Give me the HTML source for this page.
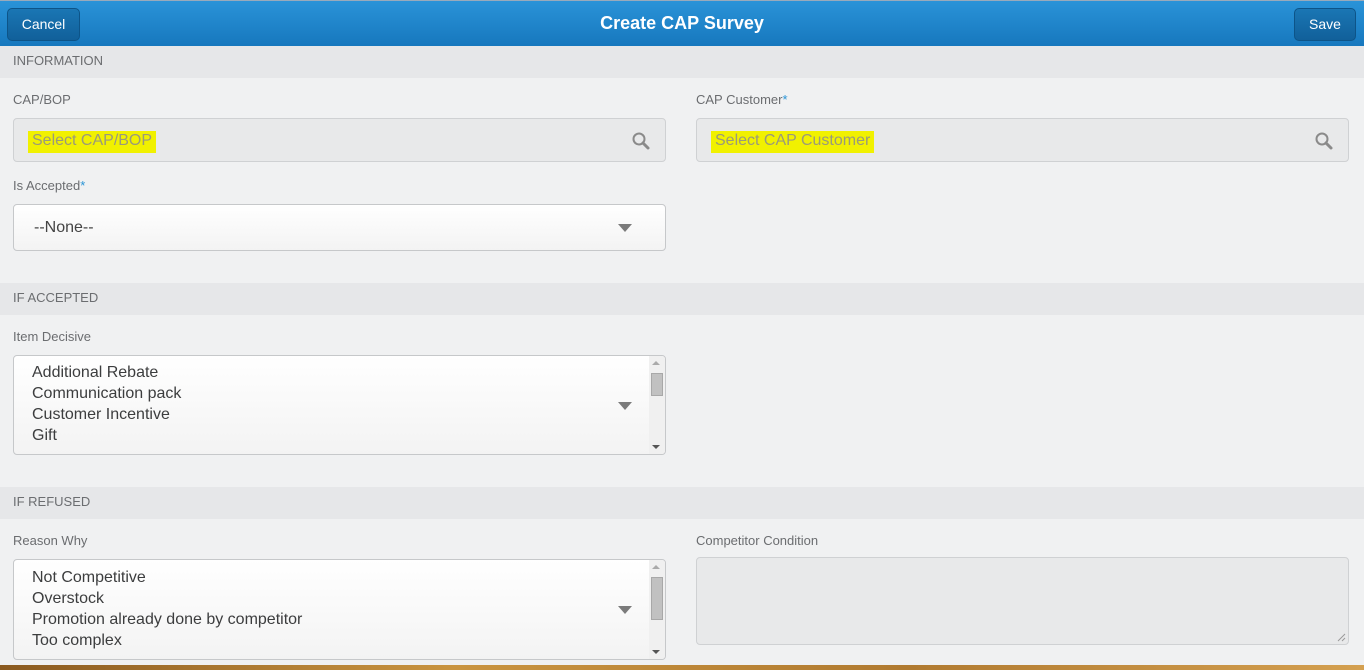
<!DOCTYPE html>
<html><head><meta charset="utf-8"><style>
*{box-sizing:border-box;margin:0;padding:0}
body{width:1364px;height:670px;overflow:hidden;background:#f0f1f2;font-family:"Liberation Sans",sans-serif;position:relative}
.a{position:absolute}
.hdr{left:0;top:0;width:1364px;height:47px;background:linear-gradient(#2a93d8,#1677bd);border-top:1px solid #9ab}
.btn{top:8px;height:33px;border-radius:5px;background:linear-gradient(#1a76b4,#11609a);border:1px solid #0d5488;color:#fff;font-size:14px;text-align:center;line-height:31px}
.title{left:0;width:1364px;top:13px;text-align:center;color:#fff;font-size:18px;font-weight:bold}
.sec{left:0;width:1364px;height:32px;background:#e6e7e9;color:#6b6d70;font-size:13px;padding:7px 0 0 13px}
.lbl{font-size:13px;color:#6b6d70}
.lbl b{color:#2a94d6;font-weight:normal}
.inp{height:44px;border:1px solid #cfd1d3;border-radius:4px;background:#e8e9ea}
.ph{top:12px;left:14px;background:#f1f100;color:#9a9a7a;font-size:16px;padding:1px 4px;height:22px}
.sel{border:1px solid #c6c8ca;border-radius:4px;background:linear-gradient(#fff,#f3f3f3)}
.tri{width:0;height:0;border-left:7px solid transparent;border-right:7px solid transparent;border-top:8px solid #7b7b7b}
.li{font-size:16px;color:#3c3d3e;line-height:21px}
.sb{right:0;top:0;width:16px;height:100%;background:#f0f0f0}
</style></head><body>
<div class="a hdr"></div>
<div class="a btn" style="left:7px;width:73px">Cancel</div>
<div class="a btn" style="left:1294px;width:62px">Save</div>
<div class="a title">Create CAP Survey</div>

<div class="a sec" style="top:46px">INFORMATION</div>
<div class="a lbl" style="left:13px;top:92px">CAP/BOP</div>
<div class="a lbl" style="left:696px;top:92px">CAP Customer<b>*</b></div>
<div class="a inp" style="left:13px;top:118px;width:653px"><div class="a ph">Select CAP/BOP </div>
<svg class="a" style="right:14px;top:12px" width="20" height="20" viewBox="0 0 20 20"><circle cx="8" cy="8" r="5.5" fill="none" stroke="#8a8a8a" stroke-width="2"/><line x1="12" y1="12" x2="17" y2="17" stroke="#8a8a8a" stroke-width="3" stroke-linecap="round"/></svg></div>
<div class="a inp" style="left:696px;top:118px;width:653px"><div class="a ph">Select CAP Customer</div>
<svg class="a" style="right:14px;top:12px" width="20" height="20" viewBox="0 0 20 20"><circle cx="8" cy="8" r="5.5" fill="none" stroke="#8a8a8a" stroke-width="2"/><line x1="12" y1="12" x2="17" y2="17" stroke="#8a8a8a" stroke-width="3" stroke-linecap="round"/></svg></div>
<div class="a lbl" style="left:13px;top:178px">Is Accepted<b>*</b></div>
<div class="a sel" style="left:13px;top:204px;width:653px;height:47px"><div class="a li" style="left:20px;top:12px;color:#444">--None--</div><div class="a tri" style="left:604px;top:19px"></div></div>

<div class="a sec" style="top:283px">IF ACCEPTED</div>
<div class="a lbl" style="left:13px;top:329px">Item Decisive</div>
<div class="a sel" style="left:13px;top:355px;width:653px;height:100px;overflow:hidden">
<div class="a li" style="left:18px;top:6px">Additional Rebate<br>Communication pack<br>Customer Incentive<br>Gift</div>
<div class="a tri" style="left:604px;top:46px"></div>
<div class="a sb"><div class="a" style="left:3px;top:5px;border-left:4px solid transparent;border-right:4px solid transparent;border-bottom:4px solid #aaa"></div><div class="a" style="left:2px;top:17px;width:12px;height:23px;background:#c1c1c1;border:1px solid #a8a8a8"></div><div class="a" style="left:3px;bottom:5px;border-left:4px solid transparent;border-right:4px solid transparent;border-top:4px solid #555"></div></div></div>

<div class="a sec" style="top:487px">IF REFUSED</div>
<div class="a lbl" style="left:13px;top:533px">Reason Why</div>
<div class="a lbl" style="left:696px;top:533px">Competitor Condition</div>
<div class="a sel" style="left:13px;top:559px;width:653px;height:101px;overflow:hidden">
<div class="a li" style="left:18px;top:7px">Not Competitive<br>Overstock<br>Promotion already done by competitor<br>Too complex</div>
<div class="a tri" style="left:604px;top:46px"></div>
<div class="a sb"><div class="a" style="left:3px;top:5px;border-left:4px solid transparent;border-right:4px solid transparent;border-bottom:4px solid #aaa"></div><div class="a" style="left:2px;top:17px;width:12px;height:43px;background:#c1c1c1;border:1px solid #a8a8a8"></div><div class="a" style="left:3px;bottom:5px;border-left:4px solid transparent;border-right:4px solid transparent;border-top:4px solid #555"></div></div></div>
<div class="a" style="left:696px;top:557px;width:653px;height:88px;border:1px solid #cfd1d3;border-radius:4px;background:#e8e9ea">
<svg class="a" style="right:2px;bottom:2px" width="9" height="9"><line x1="8" y1="1" x2="1" y2="8" stroke="#999"/><line x1="8" y1="5" x2="5" y2="8" stroke="#999"/></svg></div>
<div class="a" style="left:0;top:665px;width:1364px;height:5px;background:linear-gradient(90deg,#8a5a20,#c99440,#b07a30,#d4a050)"></div>
</body></html>
